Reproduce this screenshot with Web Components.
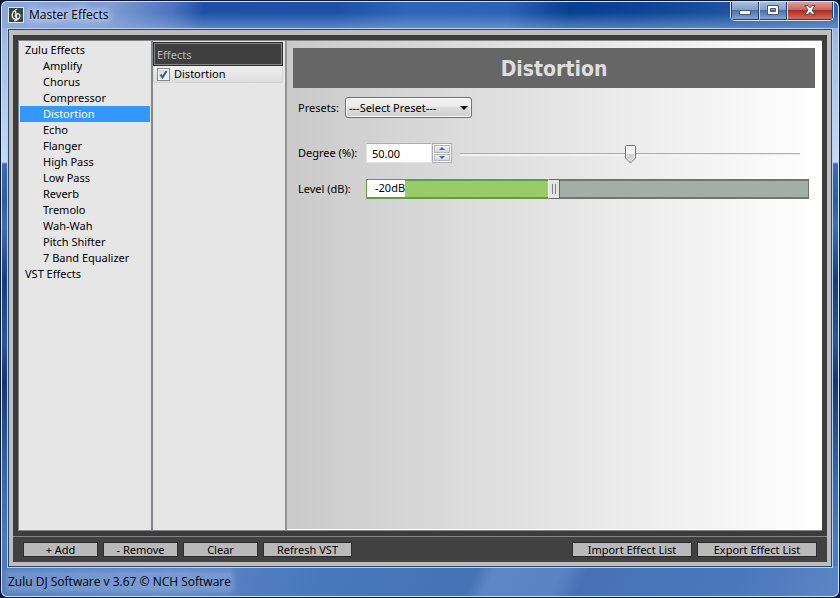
<!doctype html>
<html lang="en">
  <head>
    <meta charset="utf-8">
    <title>Master Effects</title>
    <style>
      html, body {
        margin: 0;
        padding: 0;
        height: 100%;
      }
      body {
        background: #0b1530;
        color: #000;
        font: 11px/16px "Noto Sans", "Open Sans", sans-serif;
        --ui-font: "Open Sans", "Noto Sans", sans-serif;
      }
    </style>
  </head>
  <body>
    <template id="app-window">
      <style>
        :host {
          box-sizing: border-box;
          height: 100%;
          display: flex;
          flex-direction: column;
          overflow: hidden;
          padding: 0 6px;
          border: 1px solid #0a1838;
          border-radius: 7px;
          box-shadow: inset 0 0 0 1px #d3e4f8;
          background:
            linear-gradient(115deg, #4b79bb 0%, #5c86c6 20%, #4a78bd 38%, #4472b3 56%, #5c87c6 58%, #5a85c5 66%, #4672b5 69%, #4b78bd 88%, #5c87c6 100%) 0 100% / 100% 31px no-repeat,
            linear-gradient(#8eaadb, #a8c2e6 60px, #c5d8f0 161px, #3b6db2 163px, #2d5da4 200px, #3e6db4 225px, #153d7c 280px, #2a5597 340px, #17376b 380px, #3465ad 470px, #4c7ac0 540px);
        }
        header {
          display: flex;
          height: 26px;
          flex: none;
          margin: 1px -5px 0;
          padding-left: 6px;
          border-radius: 6px 6px 0 0;
          background:
            linear-gradient(#fff0 40%, #8fb0df88),
            linear-gradient(100deg, #8ba7dc 0, #7d9bd4 110px, #4a73bc 170px, #1d50a5 200px, #1c50a6 330px, #2d66b6 400px, #2b63b4 500px, #04418f 560px, #0b4595 630px, #3262a9 100%);
        }
        .icon {
          width: 16px;
          height: 16px;
          margin-top: 5px;
        }
        h1 {
          margin: 4px 0 0 5px;
          font: 12px/18px var(--ui-font);
          text-shadow: 0 0 6px #dce8fa, 0 0 8px #dce8fa, 0 0 10px #dce8fa;
        }
        window-controls {
          margin: 0 4px 0 auto;
        }
        main {
          flex: 1;
          min-height: 0;
          display: flex;
          flex-direction: column;
          border: 1px solid #b9d2ef;
          background: #bdbdbd;
          box-shadow: inset 0 0 0 1px #27476f;
          padding: 6px 5px 5px;
        }
        footer {
          flex: none;
          height: 29px;
          padding-left: 1px;
          font: 12px/28px var(--ui-font);
        }
        footer span {
          background: #b4c9e955;
          box-shadow: 0 0 6px 3px #b4c9e955;
        }
      </style>
      <header>
        <svg class="icon" viewBox="0 0 16 16" aria-hidden="true">
          <rect x=".5" y=".5" width="15" height="15" fill="#36463f" stroke="#dfe8e4"/>
          <path d="M9 2 C6 3.500 4 6 4.200 9 C4.500 12.800 9.500 13 11.300 11 C12.800 9 11.600 6.700 9.600 6.700 C7.600 6.800 6.600 9 8 10.200 M7.400 4 L9 12.500 C8.800 14 6.800 14 6.500 13" fill="none" stroke="#f2f6f4" stroke-width="1.300"/>
        </svg>
        <h1><slot name="title"></slot></h1>
        <window-controls></window-controls>
      </header>
      <main><slot></slot></main>
      <footer><span><slot name="status"></slot></span></footer>
    </template>

    <template id="window-controls">
      <style>
        :host {
          display: flex;
          box-sizing: border-box;
          height: 19px;
          width: 104px;
          border: 1px solid #d8e4f6;
          border-top: 0;
          border-radius: 0 0 5px 5px;
          overflow: hidden;
        }
        button {
          display: grid;
          place-items: center;
          flex: 27;
          margin: 0;
          padding: 0 0 1px;
          border: 1px solid #24406e;
          border-top: 0;
          background: linear-gradient(#a7bfe0, #7f9ecb 46%, #4a70a9 50%, #7fa4d4);
        }
        button + button {
          border-left: 1px solid #cfdef2;
        }
        .close {
          flex: 46;
          background: linear-gradient(#dda099, #c8665b 46%, #ad2b1b 50%, #d1705c);
        }
      </style>
      <button aria-label="Minimize">
        <svg width="12" height="12"><rect x=".5" y="6.500" width="11" height="4" fill="#fff" stroke="#4d5870"/></svg>
      </button>
      <button aria-label="Maximize">
        <svg width="12" height="12"><path d="M.5 1.500h11v9h-11z M3.500 4.500v3h5v-3z" fill="#fff" fill-rule="evenodd" stroke="#4d5870"/></svg>
      </button>
      <button class="close" aria-label="Close">
        <svg width="12" height="12"><path d="M.8 1.500H4L6 3.800 8 1.500h3.200L8 6l3.200 4.500H8L6 8.200 4 10.500H.8L4 6z" fill="#fff" stroke="#5a4550"/></svg>
      </button>
    </template>

    <template id="effects-workspace">
      <style>
        :host {
          flex: 1;
          min-height: 0;
          display: flex;
          flex-direction: column;
          background: #3c3c3c;
        }
        .panes {
          flex: 1;
          min-height: 0;
          margin: 5px;
          display: grid;
          grid-template-columns: 133px 135px 1fr;
          box-sizing: border-box;
          border: 1px solid #85878b;
          border-right: 0;
        }
      </style>
      <div class="panes"><slot></slot></div>
      <slot name="toolbar"></slot>
    </template>

    <template id="effect-tree">
      <style>
        :host {
          display: block;
          padding: 1px;
          border-right: 1px solid #85878b;
          background: #e6e6e6;
        }
      </style>
      <slot></slot>
    </template>

    <template id="tree-item">
      <style>
        :host {
          display: block;
          padding-left: 5px;
          white-space: nowrap;
        }
        :host([level="2"]) {
          padding-left: 23px;
        }
        :host([selected]) {
          background: #3399ff;
          color: #fff;
        }
      </style>
      <slot></slot>
    </template>

    <template id="effect-list">
      <style>
        :host {
          display: block;
          padding: 1px 1px 1px 0;
          border-left: 1px solid #85878b;
          border-right: 2px solid #93959a;
          background: #e6e6e6;
        }
        h2 {
          margin: 0 1px 0 0;
          padding: 3px 3px 1px;
          border: 1px solid #2c2c2c;
          box-shadow: inset 0 0 0 1px #858585;
          background: #3f3f3f;
          color: #b8b8b8;
          font: inherit;
          line-height: 18px;
        }
      </style>
      <h2><slot name="heading"></slot></h2>
      <slot></slot>
    </template>

    <template id="effect-entry">
      <style>
        :host {
          display: block;
        }
        label {
          display: flex;
          align-items: center;
          gap: 4px;
          height: 16px;
          margin-right: 1px;
          padding-left: 3px;
          border: 1px solid #d5d5d5;
          border-top: 0;
          border-radius: 3px;
          background: linear-gradient(#f0f0f0, #dedede);
        }
        .tick {
          display: grid;
        }
        .tick > * {
          grid-area: 1 / 1;
        }
        input {
          appearance: none;
          box-sizing: border-box;
          width: 13px;
          height: 13px;
          margin: 0;
          border: 1px solid #85878b;
          background: linear-gradient(135deg, #cdd2da, #f6f6f6);
          box-shadow: inset 0 0 0 1px #f4f4f4;
        }
        svg {
          pointer-events: none;
        }
        input:not(:checked) + svg {
          visibility: hidden;
        }
      </style>
      <label>
        <span class="tick">
          <input type="checkbox">
          <svg width="13" height="13"><path d="M3.500 6.500 5.500 9.500 9.500 3" fill="none" stroke="#3f5594" stroke-width="2"/></svg>
        </span>
        <slot></slot>
      </label>
    </template>

    <template id="effect-editor">
      <style>
        :host {
          display: block;
          padding: 7px 7px 0 6px;
          border-bottom: 1px solid #fff;
          background: linear-gradient(90deg, #cacaca, #fff);
        }
        h2 {
          margin: 0 0 9px;
          padding-top: 2px;
          background: #666;
          color: #dedede;
          text-align: center;
          font: bold 21px/38px "DejaVu Sans Condensed", "DejaVu Sans", sans-serif;
          font-stretch: condensed;
        }
        .controls {
          display: flex;
          flex-direction: column;
          padding: 0 6px 0 5px;
        }
      </style>
      <h2><slot name="heading"></slot></h2>
      <div class="controls"><slot></slot></div>
    </template>

    <template id="preset-picker">
      <style>
        :host {
          display: flex;
          align-items: center;
          margin-bottom: 25px;
        }
        label {
          width: 47px;
        }
        .box {
          display: grid;
          align-items: center;
          width: 127px;
        }
        .box > * {
          grid-area: 1 / 1;
        }
        select {
          appearance: none;
          box-sizing: border-box;
          width: 100%;
          height: 21px;
          margin: 0;
          padding: 0 16px 0 3px;
          border: 1px solid #707070;
          border-radius: 3px;
          box-shadow: inset 0 0 0 1px #fafafa;
          background: linear-gradient(#f2f2f2, #ebebeb 49%, #dddddd 50%, #cfcfcf);
          color: #000;
          font: inherit;
        }
        svg {
          justify-self: end;
          margin-right: 4px;
          pointer-events: none;
        }
      </style>
      <label for="preset"><slot></slot></label>
      <div class="box">
        <select id="preset"><option>---Select Preset---</option></select>
        <svg width="8" height="4"><path d="M0 0h8L4 4z"/></svg>
      </div>
    </template>

    <template id="amount-field">
      <style>
        :host {
          display: flex;
          align-items: center;
          margin-bottom: 16px;
        }
        label {
          width: 68px;
        }
        .number {
          box-sizing: border-box;
          width: 66px;
          height: 20px;
          margin: 0;
          padding: 0 5px;
          border: 1px solid #e2e3ea;
          border-top-color: #abadb3;
          background: #fff;
          color: #000;
          font: inherit;
        }
        .spin {
          display: flex;
          flex-direction: column;
          gap: 1px;
          box-sizing: border-box;
          width: 20px;
          height: 20px;
          padding: 1px;
          border: 1px solid #a9abb0;
          background: #fff;
        }
        .spin button {
          flex: 1;
          display: grid;
          place-items: center;
          margin: 0;
          padding: 0;
          border: 1px solid #b5b5b5;
          background: linear-gradient(#f2f2f2, #d8d8d8);
        }
        .range {
          appearance: none;
          flex: 1;
          min-width: 0;
          height: 20px;
          margin: 0 9px 0 8px;
          background: linear-gradient(#b0b0b0, #b0b0b0) 0 10px / 100% 1px no-repeat,
            linear-gradient(#e7eaea, #fcfcfc) 0 11px / 100% 2px no-repeat;
        }
        .range::-webkit-slider-thumb {
          appearance: none;
          width: 11px;
          height: 19px;
          margin-top: 2px;
          background: url("data:image/svg+xml,%3Csvg xmlns='http://www.w3.org/2000/svg' width='11' height='19'%3E%3Cpath d='M1.5 .5h8l1 1v11.500l-5 5-5-5V1.500z' fill='%23f3f3f3' stroke='%23707070'/%3E%3Cpath d='M2 9h7v3.500l-3.500 3.500L2 12.500z' fill='%23d3d3d3'/%3E%3C/svg%3E") no-repeat;
        }
      </style>
      <label for="number"><slot></slot></label>
      <input class="number" id="number" type="text">
      <div class="spin">
        <button aria-label="Increase"><svg width="6" height="3"><path d="M3 0 6 3H0z" fill="#4b62a0"/></svg></button>
        <button aria-label="Decrease"><svg width="6" height="3"><path d="M0 0h6L3 3z" fill="#4b62a0"/></svg></button>
      </div>
      <input class="range" type="range" min="0" max="100" step="0.01" aria-label="Degree">
    </template>

    <template id="level-fader">
      <style>
        :host {
          display: flex;
          align-items: center;
        }
        label {
          width: 68px;
        }
        .fader {
          flex: 1;
          display: grid;
        }
        .fader > * {
          grid-area: 1 / 1;
        }
        input {
          appearance: none;
          box-sizing: border-box;
          width: 100%;
          height: 20px;
          margin: 0;
          border: solid transparent;
          border-width: 2px 1px;
          background:
            linear-gradient(90deg, #99cc66 var(--level), #a6aca6 0) padding-box,
            linear-gradient(90deg, #669944 var(--level), #6e776f 0) border-box;
        }
        input::-webkit-slider-thumb {
          appearance: none;
          box-sizing: border-box;
          width: 12px;
          height: 20px;
          border: 1px solid #6a6a6a;
          border-left-color: #fff;
          background:
            linear-gradient(90deg, #808080 1px, #fff0 1px 3px, #808080 3px) 3px 4px / 4px 10px no-repeat,
            #e4e4e4;
        }
        output {
          justify-self: start;
          align-self: start;
          z-index: 1;
          margin: 1px;
          padding: 0 0 1px 8px;
          background: #fff;
          pointer-events: none;
        }
      </style>
      <label for="level"><slot></slot></label>
      <div class="fader">
        <input id="level" type="range" min="-60" max="35">
        <output for="level"></output>
      </div>
    </template>

    <template id="tool-bar">
      <style>
        :host {
          display: flex;
          gap: 5px;
          padding: 5px 10px;
          border-top: 1px solid #858585;
          background: #414141;
        }
      </style>
      <slot></slot>
    </template>

    <template id="tool-button">
      <style>
        :host {
          display: block;
          width: 75px;
        }
        :host([size="medium"]) {
          width: 89px;
        }
        :host([size="large"]) {
          width: 120px;
        }
        :host([push]) {
          margin-left: auto;
        }
        button {
          display: block;
          box-sizing: border-box;
          width: 100%;
          height: 15px;
          margin: 0;
          padding: 0;
          border: 1px solid #2b2b2b;
          background: #b9b9b9;
          color: #000;
          font: inherit;
          line-height: 13px;
          white-space: nowrap;
        }
      </style>
      <button><slot></slot></button>
    </template>

    <app-window>
      <span slot="title">Master Effects</span>
      <effects-workspace>
        <effect-tree>
          <tree-item>Zulu Effects</tree-item>
          <tree-item level="2">Amplify</tree-item>
          <tree-item level="2">Chorus</tree-item>
          <tree-item level="2">Compressor</tree-item>
          <tree-item level="2" selected>Distortion</tree-item>
          <tree-item level="2">Echo</tree-item>
          <tree-item level="2">Flanger</tree-item>
          <tree-item level="2">High Pass</tree-item>
          <tree-item level="2">Low Pass</tree-item>
          <tree-item level="2">Reverb</tree-item>
          <tree-item level="2">Tremolo</tree-item>
          <tree-item level="2">Wah-Wah</tree-item>
          <tree-item level="2">Pitch Shifter</tree-item>
          <tree-item level="2">7 Band Equalizer</tree-item>
          <tree-item>VST Effects</tree-item>
        </effect-tree>
        <effect-list>
          <span slot="heading">Effects</span>
          <effect-entry checked>Distortion</effect-entry>
        </effect-list>
        <effect-editor>
          <span slot="heading">Distortion</span>
          <preset-picker>Presets:</preset-picker>
          <amount-field value="50.00">Degree (%):</amount-field>
          <level-fader value="-20">Level (dB):</level-fader>
        </effect-editor>
        <tool-bar slot="toolbar">
          <tool-button>+ Add</tool-button>
          <tool-button>- Remove</tool-button>
          <tool-button>Clear</tool-button>
          <tool-button size="medium">Refresh VST</tool-button>
          <tool-button size="large" push>Import Effect List</tool-button>
          <tool-button size="large">Export Effect List</tool-button>
        </tool-bar>
      </effects-workspace>
      <span slot="status">Zulu DJ Software v 3.67 © NCH Software</span>
    </app-window>

    <script>
      class TemplateElement extends HTMLElement {
        constructor() {
          super();
          const template = document.getElementById(this.localName);
          this.attachShadow({ mode: "open" })
            .appendChild(template.content.cloneNode(true));
        }
        find(selector) {
          return this.shadowRoot.querySelector(selector);
        }
      }

      class EffectTree extends TemplateElement {
        connectedCallback() {
          this.setAttribute("role", "tree");
          this.addEventListener("click", (event) => {
            const item = event.target.closest("tree-item");
            if (!item) return;
            this.querySelectorAll("tree-item").forEach((other) => {
              other.toggleAttribute("selected", other === item);
            });
          });
        }
      }

      class TreeItem extends TemplateElement {
        connectedCallback() {
          this.setAttribute("role", "treeitem");
        }
      }

      class EffectEntry extends TemplateElement {
        connectedCallback() {
          this.find("input").checked = this.hasAttribute("checked");
        }
      }

      class AmountField extends TemplateElement {
        connectedCallback() {
          const number = this.find(".number");
          const range = this.find(".range");
          const [up, down] = this.shadowRoot.querySelectorAll("button");
          const set = (value) => {
            range.value = value;
            number.value = Number(range.value).toFixed(2);
          };
          range.addEventListener("input", () => set(range.value));
          number.addEventListener("change", () => set(number.value));
          up.addEventListener("click", () => set(Number(range.value) + 1));
          down.addEventListener("click", () => set(Number(range.value) - 1));
          set(this.getAttribute("value"));
        }
      }

      class LevelFader extends TemplateElement {
        connectedCallback() {
          const input = this.find("input");
          const update = () => {
            const part = (input.value - input.min) / (input.max - input.min);
            input.style.setProperty("--level", `${part * 100}%`);
            this.find("output").textContent = `${input.value}dB`;
          };
          input.value = this.getAttribute("value");
          input.addEventListener("input", update);
          update();
        }
      }

      [
        "window-controls", "app-window", "effects-workspace", "effect-list",
        "effect-editor", "preset-picker", "tool-bar", "tool-button",
      ].forEach((name) => {
        customElements.define(name, class extends TemplateElement {});
      });
      customElements.define("effect-tree", EffectTree);
      customElements.define("tree-item", TreeItem);
      customElements.define("effect-entry", EffectEntry);
      customElements.define("amount-field", AmountField);
      customElements.define("level-fader", LevelFader);
    </script>
  </body>
</html>
